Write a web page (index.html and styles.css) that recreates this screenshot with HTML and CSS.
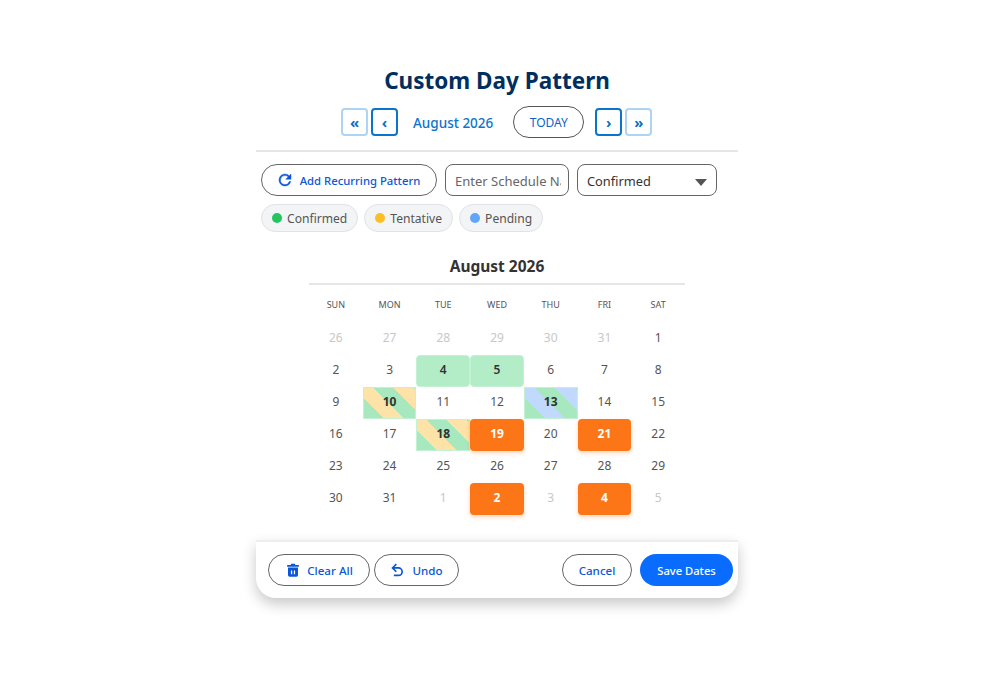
FILE: index.html
```html
<!DOCTYPE html>
<html lang="en">
<head>
<meta charset="utf-8">
<title>Custom Day Pattern</title>
<link rel="stylesheet" href="styles.css">
</head>
<body>
<main class="panel">
  <h1 class="title">Custom Day Pattern</h1>
  <div class="nav">
    <button class="nav-btn faint">«</button>
    <button class="nav-btn">‹</button>
    <span class="nav-month">August 2026</span>
    <button class="today">TODAY</button>
    <button class="nav-btn">›</button>
    <button class="nav-btn faint">»</button>
  </div>
  <div class="toolbar">
    <button class="pill-btn recurring">
      <svg class="icon refresh" viewBox="0 0 24 24"><path d="M17.65 6.35A7.96 7.96 0 0 0 12 4a8 8 0 1 0 7.73 10h-2.08A6 6 0 1 1 12 6c1.66 0 3.14.69 4.22 1.78L13 11h7V4z"/></svg>
      Add Recurring Pattern
    </button>
    <input class="name-input" type="text" placeholder="Enter Schedule Name">
    <div class="select">Confirmed<span class="caret"></span></div>
  </div>
  <div class="legend">
    <span class="chip"><i class="dot green"></i>Confirmed</span>
    <span class="chip"><i class="dot amber"></i>Tentative</span>
    <span class="chip"><i class="dot blue"></i>Pending</span>
  </div>
  <section class="calendar">
    <h2 class="cal-title">August 2026</h2>
    <div class="grid">
      <div class="dow">SUN</div><div class="dow">MON</div><div class="dow">TUE</div><div class="dow">WED</div><div class="dow">THU</div><div class="dow">FRI</div><div class="dow">SAT</div>
      <div class="day out">26</div><div class="day out">27</div><div class="day out">28</div><div class="day out">29</div><div class="day out">30</div><div class="day out">31</div><div class="day">1</div>
      <div class="day">2</div><div class="day">3</div><div class="day conf">4</div><div class="day conf">5</div><div class="day">6</div><div class="day">7</div><div class="day">8</div>
      <div class="day">9</div><div class="day mix-a">10</div><div class="day">11</div><div class="day">12</div><div class="day mix-c">13</div><div class="day">14</div><div class="day">15</div>
      <div class="day">16</div><div class="day">17</div><div class="day mix-a">18</div><div class="day sel">19</div><div class="day">20</div><div class="day sel">21</div><div class="day">22</div>
      <div class="day">23</div><div class="day">24</div><div class="day">25</div><div class="day">26</div><div class="day">27</div><div class="day">28</div><div class="day">29</div>
      <div class="day">30</div><div class="day">31</div><div class="day out">1</div><div class="day sel">2</div><div class="day out">3</div><div class="day sel">4</div><div class="day out">5</div>
    </div>
  </section>
  <footer class="footer">
    <button class="pill-btn foot clear">
      <svg class="icon big" viewBox="0 0 24 24"><path fill-rule="evenodd" d="M9.5 4.5h5V6H19v2H5V6h4.5zM6 9h12v9a2 2 0 0 1-2 2H8a2 2 0 0 1-2-2zm3.5 3.5v4.5h1.5v-4.5zm3.5 0v4.5h1.5v-4.5z"/></svg>
      Clear All
    </button>
    <button class="pill-btn foot undo">
      <svg class="icon big" viewBox="0 0 24 24"><path d="M12.5 8.5H7.8l2.9-2.9-1.4-1.4L4 9.5l5.3 5.3 1.4-1.4-2.9-2.9h4.7a3.5 3.5 0 0 1 0 7H7v2h5.5a5.5 5.5 0 0 0 0-11z"/></svg>
      Undo
    </button>
    <span class="spacer"></span>
    <button class="pill-btn foot cancel">Cancel</button>
    <button class="save">Save Dates</button>
  </footer>
</main>
</body>
</html>
```
FILE: styles.css
```css
* { box-sizing: border-box; }
html, body { margin: 0; padding: 0; background: #fff; }
body { font-family: "Noto Sans", sans-serif; color: #444; height: 678px; overflow: hidden; }
button { font-family: inherit; cursor: pointer; }
.panel { width: 482px; margin-left: 256px; padding-top: 64px; }
.title { margin: 0; text-align: center; font-size: 22.5px; line-height: 33px; font-weight: 700; color: #002f5f; }
.nav { display: flex; align-items: center; height: 32px; margin-top: 9px; padding-left: 85px; }
.nav-btn { width: 27px; height: 28px; padding: 0 0 1px; margin-right: 3px; background: #fff; border: 2px solid #0b74cc; border-radius: 4px; color: #0b6fc9; font-size: 15px; line-height: 20px; font-weight: 700; }
.nav-btn.faint { border-color: #add4f4; }
.nav-btn:last-child { margin-right: 0; }
.nav-month { margin: 0 20px 0 12px; padding-top: 2px; font-size: 13.5px; font-weight: 500; color: #0b74cc; }
.today { width: 71px; height: 32px; margin-right: 11px; padding: 0; background: #fff; border: 1px solid #555; border-radius: 16px; color: #0b63c9; font-size: 12px; }
.toolbar { display: flex; align-items: center; margin-top: 12px; padding: 12px 0 0 5px; gap: 8px; border-top: 2px solid #e6e6e6; }
.pill-btn { display: inline-flex; align-items: center; justify-content: center; gap: 6px; height: 32px; padding: 0; background: #fff; border: 1px solid #666; border-radius: 16px; color: #0b55d9; font-size: 11.3px; font-weight: 500; }
.icon { fill: currentColor; flex: none; }
.refresh { width: 18px; height: 18px; stroke: currentColor; stroke-width: .6; }
.big { width: 20px; height: 20px; }
.recurring { width: 176px; padding-right: 2px; }
.name-input { width: 124px; height: 32px; padding: 2px 7px 0 9px; border: 1px solid #666; border-radius: 8px; font: 13px "Noto Sans", sans-serif; color: #333; background: #fff; }
.name-input::placeholder { color: #666; opacity: 1; }
.select { position: relative; width: 140px; height: 32px; padding-left: 9px; border: 1px solid #666; border-radius: 8px; font-size: 12.8px; line-height: 32px; color: #333; }
.caret { position: absolute; right: 9px; top: 14px; border-left: 6px solid transparent; border-right: 6px solid transparent; border-top: 7px solid #555; }
.legend { display: flex; gap: 6px; margin-top: 8px; padding-left: 5px; }
.chip { display: inline-flex; align-items: center; height: 28px; padding: 0 10px; gap: 5px; background: #f3f4f6; border: 1px solid #e0e2e8; border-radius: 14px; font-size: 12.1px; color: #555; }
.dot { width: 10px; height: 10px; border-radius: 50%; }
.green { background: #22c55e; }
.amber { background: #fbbf24; }
.blue { background: #60a5fa; }
.calendar { width: 376px; margin: 22px auto 0; }
.cal-title { margin: 0; height: 31px; border-bottom: 2px solid #e6e6e6; text-align: center; font-size: 15.5px; line-height: 24px; font-weight: 700; color: #333; }
.grid { display: grid; grid-template-columns: repeat(7, 1fr); grid-template-rows: 31px repeat(6, 32px); padding-top: 7px; }
.dow { display: flex; align-items: center; justify-content: center; height: 24px; font-size: 9px; color: #555; }
.day { display: flex; align-items: center; justify-content: center; padding-bottom: 3px; font-size: 12px; color: #555; }
.day.out { color: #c8c8c8; }
.conf { background: #b2edc8; border-radius: 4px; border: 1px solid #c4f0d4; font-weight: 600; color: #333; }
.mix-a, .mix-c { border: 1px solid #c4f0d4; font-weight: 700; color: #333; }
.mix-a { background: repeating-linear-gradient(45deg, #a7e8be 0 14px, #fde3a7 14px 28px); }
.mix-c { background: repeating-linear-gradient(45deg, #a7e8be 0 14px, #c0d9fc 14px 28px); }
.sel { background: #fc7516; border-radius: 4px; color: #fff; font-weight: 700; box-shadow: 0 2px 4px rgba(252, 117, 22, .3); }
.footer { display: flex; align-items: center; gap: 4px; height: 58px; margin-top: 25px; padding: 0 5px 0 12px; border-top: 2px solid #eee; border-radius: 0 0 20px 20px; background: #fff; box-shadow: 0 6px 14px rgba(0, 0, 0, .22); }
.foot { gap: 4px; font-size: 11.6px; }
.clear { width: 102px; padding-right: 2px; }
.undo { width: 85px; padding-right: 2px; }
.spacer { flex: 1; }
.cancel { width: 70px; margin-right: 4px; }
.save { width: 93px; height: 32px; padding: 0; border: 0; border-radius: 16px; background: #0a6cff; color: #fff; font-size: 11.2px; font-weight: 500; }
```
